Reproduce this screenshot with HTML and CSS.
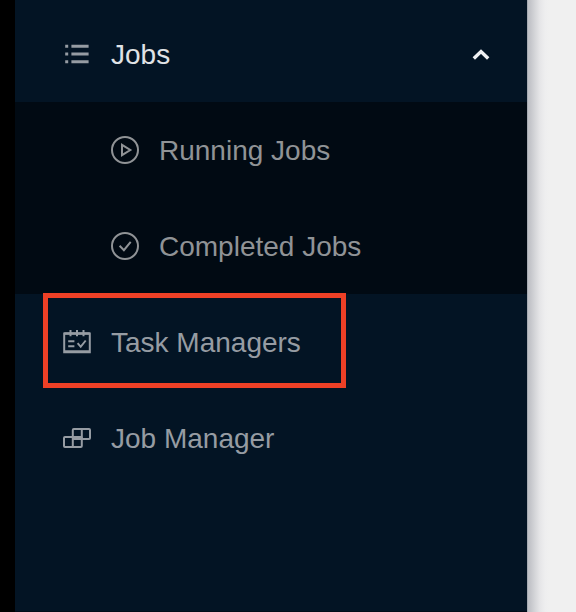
FILE: index.html
```html
<!DOCTYPE html>
<html lang="en">
<head>
<meta charset="utf-8">
<title>Navigation</title>
<link rel="stylesheet" href="styles.css">
</head>
<body>
<div class="layout">
  <nav class="sidebar">
    <div class="item open">
      <svg class="icon" viewBox="0 0 28 28"><path d="M2.2 6.2h3M8.4 6.2H25.6M2.2 14h3M8.4 14H25.6M2.2 21.8h3M8.4 21.8H25.6" stroke-width="2.9"/></svg>
      <span>Jobs</span>
      <svg class="arrow" viewBox="0 0 18 12"><path d="M1.8 9.5 9 2.5l7.2 7"/></svg>
    </div>
    <div class="submenu">
      <div class="item">
        <svg class="icon" viewBox="0 0 28 28"><circle cx="14" cy="14" r="13"/><path d="M11 8.8v10.4l8.3-5.2z"/></svg>
        <span>Running Jobs</span>
      </div>
      <div class="item">
        <svg class="icon" viewBox="0 0 28 28"><circle cx="14" cy="14" r="13"/><path d="m8.6 13.8 4.3 4.4 6.8-8.4"/></svg>
        <span>Completed Jobs</span>
      </div>
    </div>
    <div class="item highlighted">
      <svg class="icon" viewBox="0 0 28 28"><path d="M1.2 5.4h25.6v18.8H1.2zM7.5 2v6.3M14 2v6.3M20.5 2v6.3M5.2 13.2h6.2M5.2 18.2h6.2m3.2-3 3.1 3.6 5-6.3"/><path d="M1.2 5.6h25.6M1.2 23.4h25.6" stroke-width="2.5"/></svg>
      <span>Task Managers</span>
    </div>
    <div class="item">
      <svg class="icon" viewBox="0 0 28 28"><rect x="1" y="13" width="17.8" height="10" rx="1"/><rect x="9.8" y="5" width="17.2" height="10" rx="1"/><path d="M9.8 13v10M18.8 5v10"/></svg>
      <span>Job Manager</span>
    </div>
  </nav>
  <main class="content"></main>
</div>
</body>
</html>
```
FILE: styles.css
```css
body {
  margin: 0;
  background: #000;
  font: 28px/96px "Liberation Sans", Arial, sans-serif;
}

.layout {
  display: flex;
  height: 612px;
  padding-left: 15px;
  overflow: hidden;
}

.sidebar {
  box-sizing: border-box;
  width: 512px;
  padding-top: 6px;
  border-bottom: 1px solid #020c18;
  background: #031424;
  color: #969ca3;
}

.item {
  display: flex;
  align-items: center;
  height: 96px;
  padding-left: 48px;
  white-space: nowrap;
}

.item span {
  padding-top: 2px;
}

.icon {
  width: 28px;
  height: 28px;
  margin-right: 20px;
  flex: none;
  fill: none;
  stroke: currentColor;
  stroke-width: 2;
}

.open span {
  color: #e0e3e6;
}

.arrow {
  width: 18px;
  height: 12px;
  margin: 2px 37px 0 auto;
  fill: none;
  stroke: #f0f1f3;
  stroke-width: 3.4;
}

.submenu {
  background: #010a13;
  color: #909396;
}

.submenu .item {
  padding-left: 96px;
}

.highlighted {
  position: relative;
}

.highlighted::after {
  content: "";
  position: absolute;
  box-sizing: border-box;
  left: 28px;
  top: -1px;
  width: 303px;
  height: 95px;
  border: 5px solid #ee4026;
}

.content {
  flex: 1;
  background: linear-gradient(to right, #8d949d 0, #bfc1c6 1px, #c3c4c9 3px, #d5d6d9 8px, #e6e6e8 13px, #eeeeef 18px, #f0f0f0 22px);
}
```
